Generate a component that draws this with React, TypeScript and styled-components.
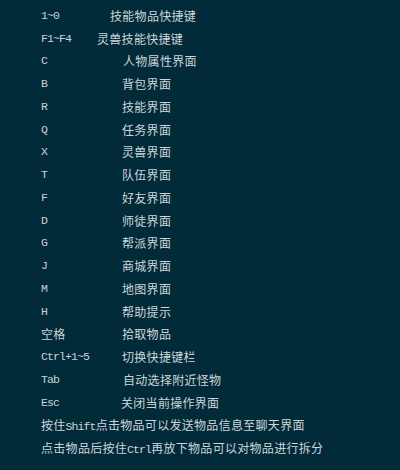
import React from "react";
import styled, { createGlobalStyle } from "styled-components";

const Global = createGlobalStyle`
  html, body {
    margin: 0;
    padding: 0;
    background: #022b3a;
  }
`;

const Panel = styled.div`
  width: 400px;
  height: 470px;
  box-sizing: border-box;
  padding: 4px 0 0 41px;
  background: #022b3a;
  color: #cdd5d9;
  font-family: "Noto Sans CJK SC", "Noto Sans", sans-serif;
  font-size: 12px;
  overflow: hidden;
`;

const Row = styled.div`
  display: flex;
  align-items: center;
  height: 22.76px;
  white-space: nowrap;
`;

const Key = styled.span`
  flex: 0 0 81px;
  font-family: "Liberation Mono", "DejaVu Sans Mono", monospace;
  font-size: 11.5px;
  letter-spacing: -0.9px;
  color: #c9d1d5;
`;

const CjkKey = styled(Key)`
  font-family: "Noto Sans CJK SC", sans-serif;
  font-size: 12px;
  letter-spacing: 0.3px;
`;

const Desc = styled.span<{ $offset: number }>`
  margin-left: ${(p) => p.$offset}px;
  letter-spacing: 0.3px;
`;

const Note = styled.span`
  letter-spacing: 0.3px;
`;

const Mono = styled.span`
  font-family: "Liberation Mono", "DejaVu Sans Mono", monospace;
  font-size: 11.5px;
  letter-spacing: -0.9px;
`;

const rows: { k: string; d: string; o: number; cjk?: boolean }[] = [
  { k: "1~0", d: "技能物品快捷键", o: -12 },
  { k: "F1~F4", d: "灵兽技能快捷键", o: -25 },
  { k: "C", d: "人物属性界面", o: 1 },
  { k: "B", d: "背包界面", o: 0 },
  { k: "R", d: "技能界面", o: 0 },
  { k: "Q", d: "任务界面", o: 0 },
  { k: "X", d: "灵兽界面", o: 0 },
  { k: "T", d: "队伍界面", o: 0 },
  { k: "F", d: "好友界面", o: 0 },
  { k: "D", d: "师徒界面", o: 0 },
  { k: "G", d: "帮派界面", o: 0 },
  { k: "J", d: "商城界面", o: 0 },
  { k: "M", d: "地图界面", o: 0 },
  { k: "H", d: "帮助提示", o: 0 },
  { k: "空格", d: "拾取物品", o: 0, cjk: true },
  { k: "Ctrl+1~5", d: "切换快捷键栏", o: 0 },
  { k: "Tab", d: "自动选择附近怪物", o: 1 },
  { k: "Esc", d: "关闭当前操作界面", o: -1 },
];

export default function App() {
  return (
    <>
      <Global />
      <Panel>
        {rows.map((r) => (
          <Row key={r.k}>
            {r.cjk ? <CjkKey>{r.k}</CjkKey> : <Key>{r.k}</Key>}
            <Desc $offset={r.o}>{r.d}</Desc>
          </Row>
        ))}
        <Row>
          <Note>
            按住<Mono>Shift</Mono>点击物品可以发送物品信息至聊天界面
          </Note>
        </Row>
        <Row>
          <Note>
            点击物品后按住<Mono>Ctrl</Mono>再放下物品可以对物品进行拆分
          </Note>
        </Row>
      </Panel>
    </>
  );
}
